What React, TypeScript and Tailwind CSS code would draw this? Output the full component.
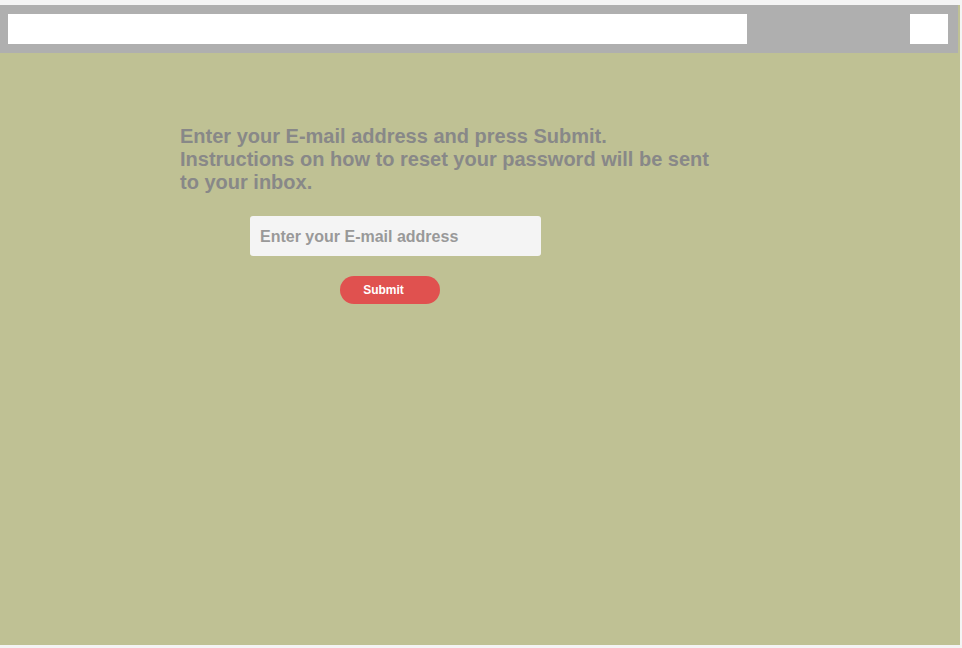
export default function App() {
  return (
    <div className="w-[962px] h-[648px] bg-[#f4f4f4] pt-[5px] font-['Liberation_Sans',Arial,sans-serif]">
      <div className="w-[960px] h-[640px] bg-[#bfc194]">
        <div className="w-[958px] h-[48px] bg-[#afafaf] flex items-center justify-between px-2">
          <div className="w-[739px] h-[30px] bg-white" />
          <div className="w-[38px] h-[30px] bg-white mr-[2px]" />
        </div>
        <div className="pl-[180px] pt-[72px]">
          <h1 className="w-[540px] text-[20px] leading-[23px] font-bold text-[#888888]">
            Enter your E-mail address and press Submit. Instructions on how to reset your password will be sent to your inbox.
          </h1>
          <div className="pl-[70px] pt-[22px]">
            <input
              type="email"
              placeholder="Enter your E-mail address"
              className="block w-[291px] h-[40px] rounded-[3px] bg-[#f4f4f4] px-[10px] pt-[2px] text-[16px] font-bold text-[#999] placeholder:text-[#999] outline-none"
            />
            <div className="pl-[90px] pt-[20px]">
              <button className="block w-[100px] h-[28px] rounded-[14px] bg-[#e0514f] text-white text-[12px] font-bold pr-[13px]">
                Submit
              </button>
            </div>
          </div>
        </div>
      </div>
    </div>
  );
}
